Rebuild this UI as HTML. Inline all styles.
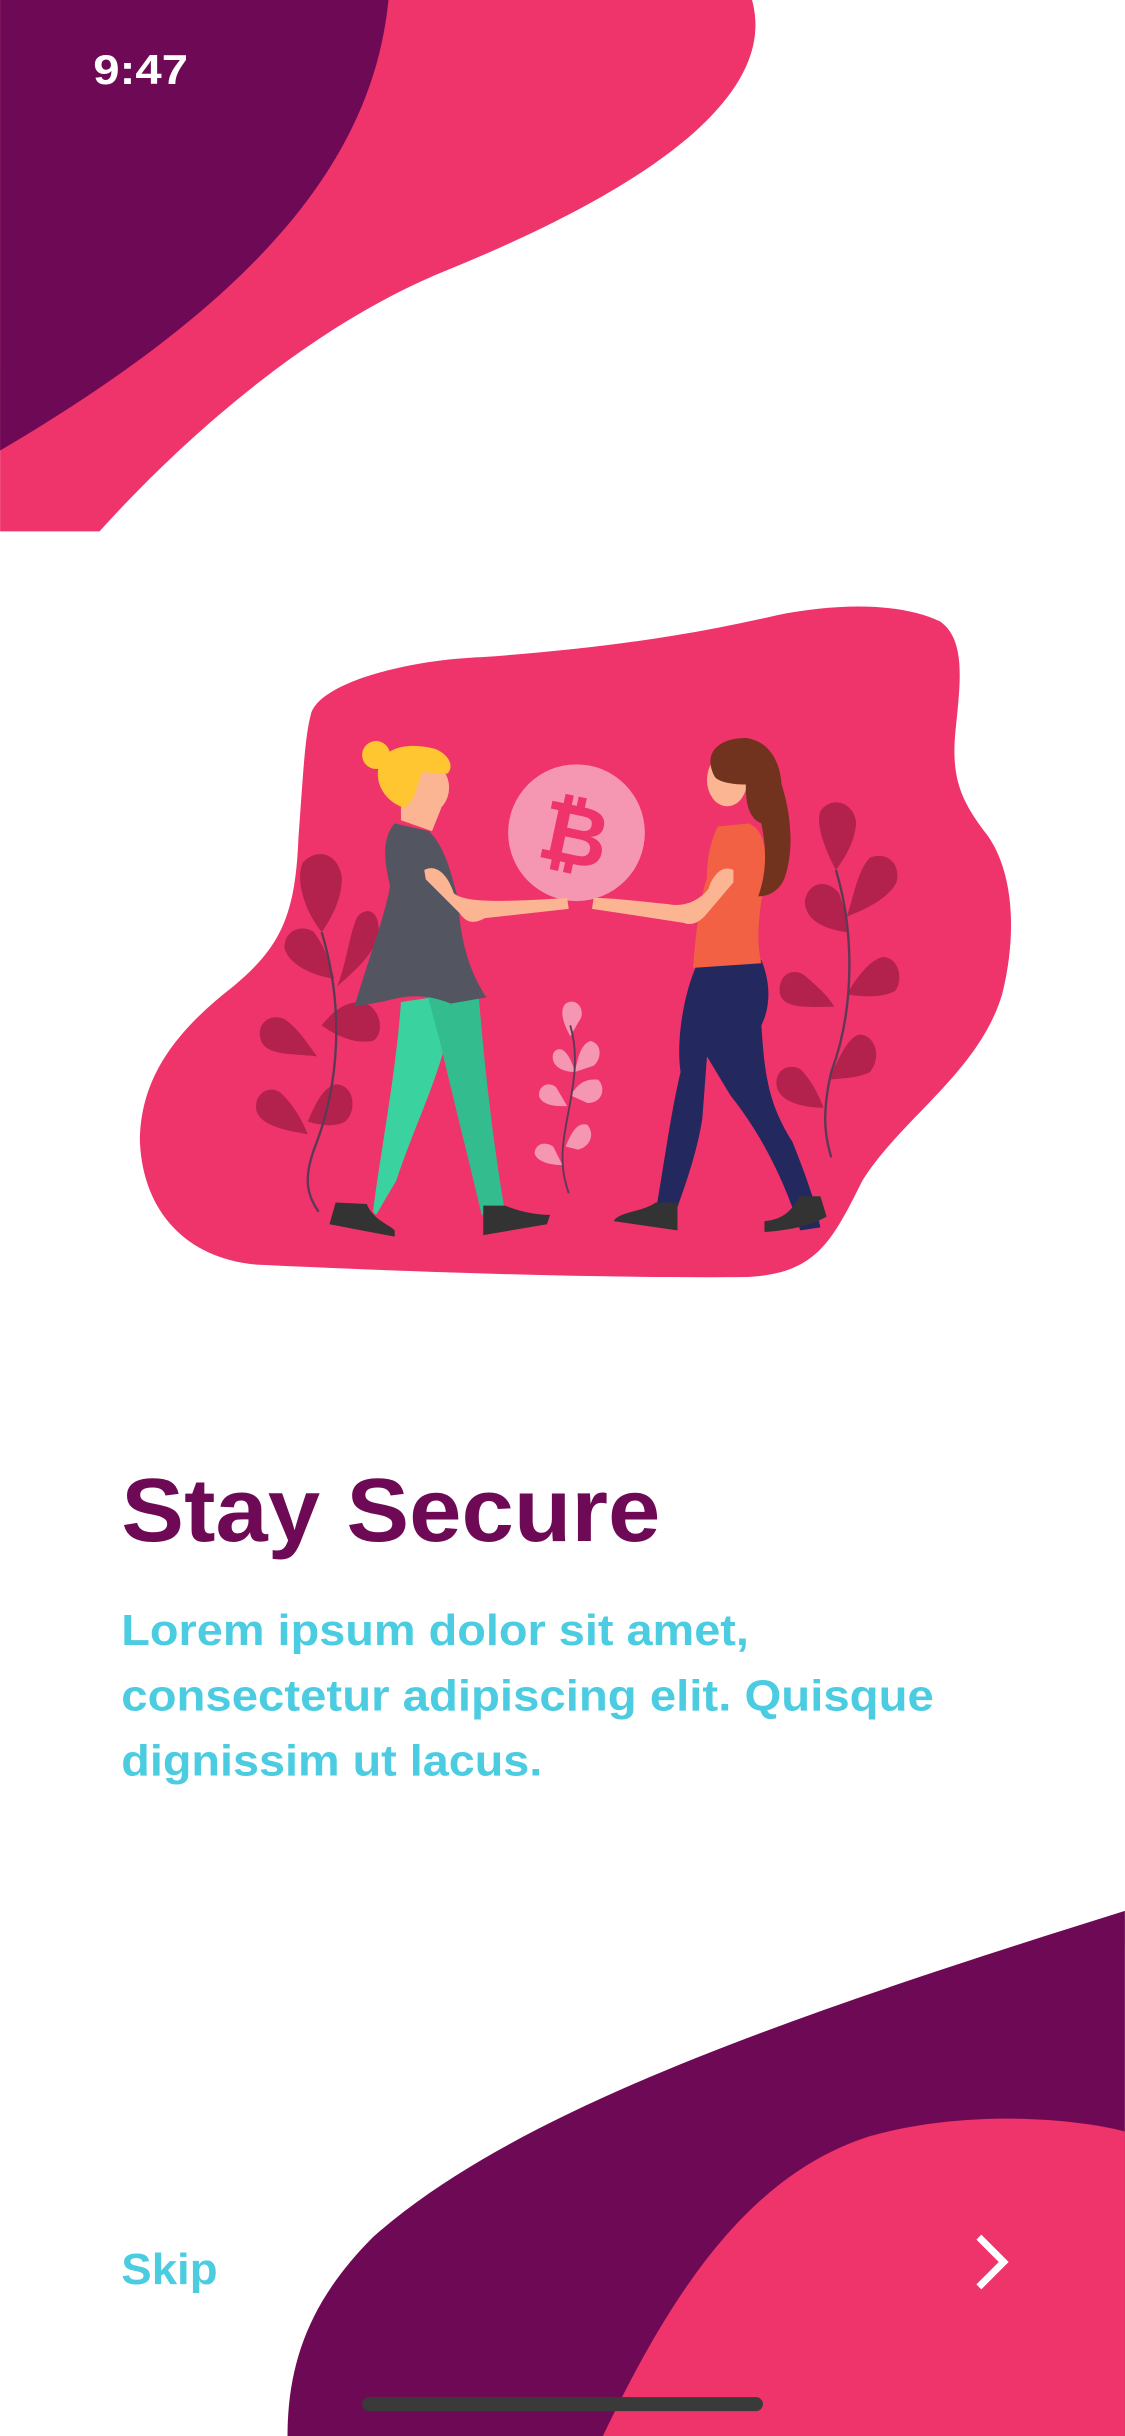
<!DOCTYPE html>
<html><head><meta charset="utf-8"><style>
html,body{margin:0;padding:0;background:#fff;}
svg{display:block}
</style></head><body>
<svg width="1125" height="2436" viewBox="0 0 724 1568" xmlns="http://www.w3.org/2000/svg">
<rect width="724" height="1568" fill="#fff"/>
<path d="M0 0 H484 C495 40 470 100 285 175 C200 210 120 280 64 342 H0 Z" fill="#EF336B"/>
<path d="M0 0 H250 C240 100 170 190 0 290 Z" fill="#6E0A55"/>
<path d="M724 1230 C500 1300 330 1360 240 1440 C200 1480 185 1520 185 1568 H724 Z" fill="#6E0A55"/>
<path d="M724 1372 C690 1363 620 1358 560 1375 C480 1400 430 1480 388 1568 H724 Z" fill="#EF336B"/>
<path d="M200 460 C205 440 260 425 310 423 C380 418 440 410 500 396 C540 388 580 388 605 400 C622 412 618 440 615 470 C612 500 618 515 635 537 C652 560 655 600 645 640 C630 690 580 720 555 760 C535 800 525 820 480 822 C380 823 250 818 165 814 C120 810 92 780 90 735 C90 690 118 660 150 635 C180 610 190 590 192 540 C195 500 196 475 200 460 Z" fill="#EF336B"/>
<g fill="#B2224D">
<path d="M207 600 C195 585 190 565 195 555 C205 545 218 550 220 565 C220 578 214 590 207 600Z"/>
<path d="M217 635 C223 620 225 600 230 590 C237 582 246 588 243 603 C240 615 228 625 217 635Z"/>
<path d="M215 630 C200 628 185 620 183 610 C183 598 195 595 202 600 C208 608 212 618 215 630Z"/>
<path d="M204 680 C190 678 172 680 168 670 C164 658 175 652 183 656 C192 662 198 672 204 680Z"/>
<path d="M207 660 C215 650 222 645 233 645 C245 648 248 665 240 670 C230 672 218 668 207 660Z"/>
<path d="M198 730 C185 728 168 725 165 715 C163 705 172 698 180 703 C188 710 194 720 198 730Z"/>
<path d="M198 722 C203 710 208 700 216 698 C228 698 230 715 222 722 C215 726 205 724 198 722Z"/>
</g>
<path d="M207 600 C222 650 218 700 202 740 C195 760 198 770 205 780" stroke="#5a3a55" stroke-width="1.5" fill="none"/>
<g fill="#B2224D">
<path d="M538 560 C530 545 525 530 528 522 C535 512 550 516 551 530 C550 542 544 552 538 560Z"/>
<path d="M545 590 C550 575 552 560 560 552 C570 548 580 555 577 568 C572 578 558 585 545 590Z"/>
<path d="M545 600 C530 598 518 592 518 580 C520 568 532 565 540 575 C543 583 545 590 545 600Z"/>
<path d="M537 648 C522 648 505 650 502 640 C500 628 510 622 518 628 C526 635 532 640 537 648Z"/>
<path d="M545 640 C552 628 560 618 568 616 C578 616 582 630 576 638 C568 642 556 642 545 640Z"/>
<path d="M530 713 C518 713 503 710 500 700 C498 690 506 684 515 688 C522 695 527 705 530 713Z"/>
<path d="M533 695 C540 682 545 668 553 666 C563 666 568 680 560 690 C552 694 542 694 533 695Z"/>
</g>
<path d="M538 560 C550 600 550 650 535 690 C528 720 532 735 535 745" stroke="#5a3a55" stroke-width="1.5" fill="none"/>
<g fill="#F597B3">
<path d="M367 667 C362 658 360 650 364 646 C370 642 376 648 374 655 Z"/>
<path d="M370 690 C372 680 374 672 380 670 C388 672 387 682 382 686 Z"/>
<path d="M370 690 C362 690 354 686 356 678 C360 672 366 676 370 690Z"/>
<path d="M365 712 C358 712 350 712 347 706 C346 698 354 696 358 700 Z"/>
<path d="M367 705 C372 698 376 694 385 695 C390 700 388 710 378 710 Z"/>
<path d="M362 750 C355 750 345 748 344 742 C345 735 352 735 356 738 Z"/>
<path d="M364 738 C368 728 372 722 378 724 C383 730 380 738 372 740 Z"/>
</g>
<path d="M367 660 C376 690 362 720 362 745 C362 755 364 762 366 768" stroke="#5a3a55" stroke-width="1.2" fill="none"/>
<ellipse cx="371" cy="536" rx="44" ry="44" fill="#F597B3"/>
<text x="370" y="556" font-family="Liberation Sans, sans-serif" font-weight="bold" font-size="54" fill="#EF336B" text-anchor="middle" transform="rotate(12 370 536)">₿</text>
<path d="M240 780 C245 740 255 690 258 645 L292 640 C290 680 268 720 255 760 L242 782Z" fill="#3AD29F"/>
<path d="M275 640 L308 640 C312 690 318 740 325 780 L310 782 C300 740 290 700 283 670Z" fill="#33BD8E"/>
<path d="M216 774 L236 775 C240 785 250 788 254 792 L254 796 L212 788Z" fill="#333"/>
<path d="M311 776 L325 776 C335 780 345 782 354 782 L352 788 L311 795Z" fill="#333"/>
<path d="M254 530 L276 535 C286 545 290 560 295 580 C296 610 305 630 313 642 L290 646 C270 638 258 642 245 645 L228 648 C238 615 249 585 251 570 C246 550 247 538 254 530Z" fill="#535561"/>
<path d="M273 560 C280 556 288 562 292 575 C300 582 330 580 365 578 L366 585 L312 591 C305 595 300 594 296 588 L274 566Z" fill="#FBB593"/>
<path d="M258 520 L262 512 L280 510 L284 520 L278 535 L258 528Z" fill="#FBB593"/>
<ellipse cx="276" cy="507" rx="13" ry="16" fill="#FBB593"/>
<path d="M260 520 C245 515 240 500 245 490 C250 480 265 478 280 482 C290 486 292 494 288 498 L272 497 C268 505 268 515 260 520Z" fill="#FFC631"/>
<circle cx="242" cy="486" r="9" fill="#FFC631"/>
<path d="M448 622 L490 618 C497 635 495 650 490 660 C492 690 494 710 510 735 C520 760 525 775 528 790 L515 792 C505 760 490 730 470 705 L455 680 L452 720 C448 745 440 765 435 780 L422 780 C428 745 432 715 438 690 C435 670 440 640 448 622Z" fill="#23285E"/>
<path d="M422 774 L436 774 L436 792 L395 786 C398 780 414 780 422 774Z" fill="#333"/>
<path d="M515 770 L528 770 L532 783 C520 790 505 792 492 793 L492 786 C505 785 510 778 515 770Z" fill="#333"/>
<path d="M462 532 L482 530 C494 535 495 555 490 580 C487 600 488 612 490 620 L446 623 C448 600 450 580 455 565 C455 550 458 540 462 532Z" fill="#F26144"/>
<path d="M472 560 C464 556 458 565 456 572 C450 580 440 584 430 582 C410 580 395 578 382 578 L381 585 L440 594 C445 596 450 594 455 588 L472 568Z" fill="#FBB593"/>
<ellipse cx="468" cy="502" rx="13" ry="17" fill="#FBB593"/>
<path d="M460 500 C452 485 462 475 480 475 C495 477 502 490 503 505 C508 520 512 545 505 565 C502 573 495 577 488 577 C494 560 493 545 490 530 C480 526 480 512 480 505 C470 505 462 503 460 500Z" fill="#71321E"/>
<text x="78" y="992" textLength="347" lengthAdjust="spacingAndGlyphs" font-family="Liberation Sans, sans-serif" font-weight="bold" font-size="58" fill="#6E0A55">Stay Secure</text>
<g font-family="Liberation Sans, sans-serif" font-weight="bold" font-size="28" fill="#4CCCE0">
<text x="78" y="1059" textLength="404" lengthAdjust="spacingAndGlyphs">Lorem ipsum dolor sit amet,</text>
<text x="78" y="1101" textLength="523" lengthAdjust="spacingAndGlyphs">consectetur adipiscing elit. Quisque</text>
<text x="78" y="1143" textLength="271" lengthAdjust="spacingAndGlyphs">dignissim ut lacus.</text>
<text x="78" y="1470" textLength="62" lengthAdjust="spacingAndGlyphs">Skip</text>
</g>
<path d="M630 1440 L646 1456 L630 1472" stroke="#fff" stroke-width="4.5" fill="none"/>
<text x="60" y="54" textLength="61" lengthAdjust="spacingAndGlyphs" font-family="Liberation Sans, sans-serif" font-weight="bold" font-size="27" fill="#fff">9:47</text>
<rect x="233" y="1543" width="258" height="9" rx="4.5" fill="#3a3a3a"/>
</svg>
</body></html>
